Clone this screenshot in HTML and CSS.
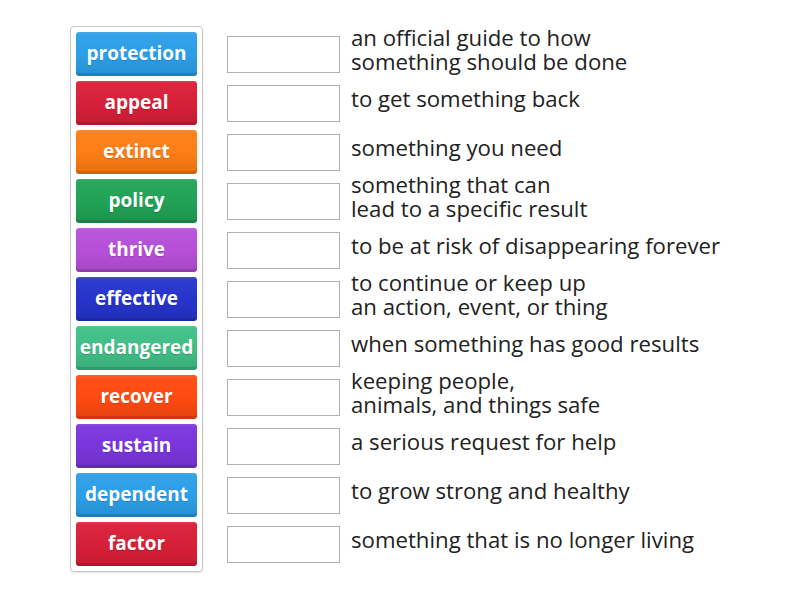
FILE: index.html
```html
<!DOCTYPE html>
<html>
<head>
<meta charset="utf-8">
<link rel="stylesheet" href="styles.css">
</head>
<body>
<div class="page">
  <div class="bank">
    <div class="tile blue">protection</div>
    <div class="tile red">appeal</div>
    <div class="tile orange">extinct</div>
    <div class="tile green">policy</div>
    <div class="tile purple">thrive</div>
    <div class="tile navy">effective</div>
    <div class="tile mint">endangered</div>
    <div class="tile vermilion">recover</div>
    <div class="tile violet">sustain</div>
    <div class="tile blue">dependent</div>
    <div class="tile red">factor</div>
  </div>
  <div class="rows">
    <div class="row"><div class="slot"></div><div class="def">an official guide to how<br>something should be done</div></div>
    <div class="row"><div class="slot"></div><div class="def">to get something back</div></div>
    <div class="row"><div class="slot"></div><div class="def">something you need</div></div>
    <div class="row"><div class="slot"></div><div class="def">something that can<br>lead to a specific result</div></div>
    <div class="row"><div class="slot"></div><div class="def">to be at risk of disappearing forever</div></div>
    <div class="row"><div class="slot"></div><div class="def">to continue or keep up<br>an action, event, or thing</div></div>
    <div class="row"><div class="slot"></div><div class="def">when something has good results</div></div>
    <div class="row"><div class="slot"></div><div class="def">keeping people,<br>animals, and things safe</div></div>
    <div class="row"><div class="slot"></div><div class="def">a serious request for help</div></div>
    <div class="row"><div class="slot"></div><div class="def">to grow strong and healthy</div></div>
    <div class="row"><div class="slot"></div><div class="def">something that is no longer living</div></div>
  </div>
</div>
</body>
</html>
```
FILE: styles.css
```css
html, body {
  margin: 0;
  padding: 0;
  background: #fff;
}
body {
  font-family: "Open Sans", "Liberation Sans", sans-serif;
  width: 800px;
  height: 600px;
  overflow: hidden;
}
.page {
  display: flex;
  align-items: flex-start;
  padding: 26px 0 0 70px;
}
.bank {
  display: flex;
  flex-direction: column;
  gap: 5px;
  padding: 5px;
  border: 1px solid #c8c8c8;
  border-radius: 4px;
  box-shadow: 0 1px 2px rgba(0,0,0,0.12);
}
.tile {
  width: 121px;
  height: 44px;
  box-sizing: border-box;
  padding-bottom: 3px;
  display: flex;
  align-items: center;
  justify-content: center;
  color: #fff;
  font-weight: 700;
  font-size: 19px;
  border-radius: 3px;
  background-image: linear-gradient(to bottom, rgba(255,255,255,0.12) 0, rgba(255,255,255,0.04) 3px, rgba(0,0,0,0) 50%, rgba(0,0,0,0.1) 100%);
  box-shadow: inset 0 -3px 0 rgba(0,0,0,0.12);
  text-shadow: 0 1px 1px rgba(0,0,0,0.15);
}
.blue { background-color: #2c9fe8; }
.red { background-color: #d81f38; }
.orange { background-color: #ff7d14; }
.green { background-color: #21a356; }
.purple { background-color: #b74fd9; }
.navy { background-color: #2634cc; }
.mint { background-color: #3fbf86; }
.vermilion { background-color: #ff4a10; }
.violet { background-color: #7b35dc; }
.rows {
  display: flex;
  flex-direction: column;
  gap: 5px;
  padding-top: 6px;
  margin-left: 24px;
}
.row {
  height: 44px;
  display: flex;
  align-items: center;
}
.slot {
  width: 113px;
  height: 37px;
  box-sizing: border-box;
  border: 1px solid #b0b0b0;
  background: #fff;
  flex: none;
}
.def {
  margin-left: 11px;
  margin-top: -9px;
  font-size: 22.2px;
  line-height: 24px;
  color: #222;
  white-space: nowrap;
}
```
